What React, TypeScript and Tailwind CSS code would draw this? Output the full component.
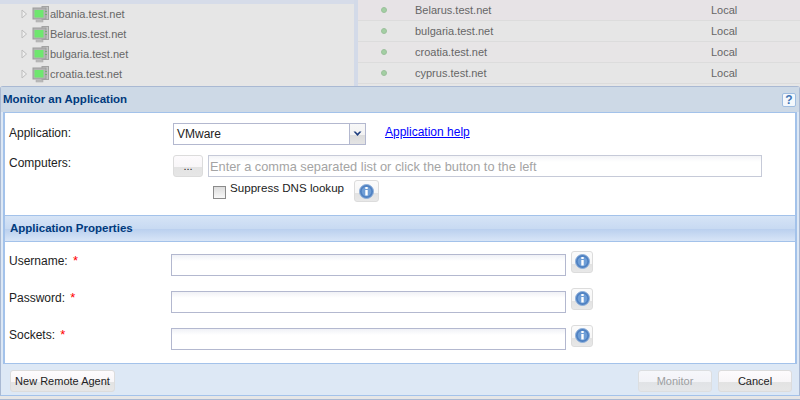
const HOSTS = ["albania.test.net", "Belarus.test.net", "bulgaria.test.net", "croatia.test.net"];
const STATUS_ROWS = ["Belarus.test.net", "bulgaria.test.net", "croatia.test.net", "cyprus.test.net"];

function ServerIcon() {
  return (
    <svg width="17" height="17" viewBox="0 0 17 17" className="shrink-0">
      <rect x="10" y="0.5" width="6.5" height="13" fill="#c4c4c4" stroke="#a2a2a2" />
      <rect x="1" y="2" width="13" height="11" fill="#b4b4b4" stroke="#9b9b9b" />
      <rect x="2.5" y="4" width="9" height="7.5" fill="#6fe66f" />
      <rect x="13" y="5" width="2" height="1" fill="#6fb56f" />
      <rect x="13" y="8" width="2" height="1" fill="#6fb56f" />
      <rect x="4" y="14" width="7" height="2" fill="#bcbcbc" stroke="#a8a8a8" strokeWidth="0.5" />
    </svg>
  );
}

function TreeArrow() {
  return (
    <svg width="7" height="10" viewBox="0 0 7 10" className="shrink-0">
      <path d="M1 1 L5.5 5 L1 9 Z" fill="#eeeeee" stroke="#bdbdbd" />
    </svg>
  );
}

function InfoGlyph() {
  return (
    <svg width="15" height="15" viewBox="0 0 15 15">
      <circle cx="7.5" cy="7.5" r="7" fill="#4f81c2" stroke="#8fb0da" />
      <circle cx="7.5" cy="7.5" r="4.8" fill="#6f9ed6" />
      <rect x="6.3" y="3" width="2.4" height="2" fill="#ffffff" />
      <rect x="6.3" y="6" width="2.4" height="5.5" fill="#ffffff" />
    </svg>
  );
}

function InfoButton() {
  return (
    <button className="flex h-[22px] w-[22px] items-center justify-center rounded-[3px] border border-[#dcdcdc] bg-[linear-gradient(#fbfbfb_0%,#f6f6f6_60%,#e2e2e2_61%,#e8e8e8_100%)]">
      <InfoGlyph />
    </button>
  );
}

function Button({ label, disabled, className }: { label: string; disabled?: boolean; className: string }) {
  return (
    <button
      className={`h-[22px] rounded-[3px] border border-[#dcdcdc] bg-[linear-gradient(#fdfbfd_0%,#f8f6f8_55%,#e3e3e3_56%,#e6e6e6_100%)] text-[11px] ${
        disabled ? "text-[#8c8c8c] opacity-80" : "text-[#222222]"
      } ${className}`}
    >
      {label}
    </button>
  );
}

function FieldRow({ label, className }: { label: string; className: string }) {
  return (
    <div className={`flex h-[25px] items-center ${className}`}>
      <div className="mb-[6px] w-[166px] shrink-0 pl-[4px] text-[#222222]">
        {label}: <span className="ml-[2px] text-[13px] text-[#ff0000]">*</span>
      </div>
      <input className="mt-[3px] h-[22px] w-[395px] border border-[#b3b8cf] bg-[linear-gradient(#f0f1f6_0%,#ffffff_30%)]" />
      <div className="mb-[4px] ml-[5px]">
        <InfoButton />
      </div>
    </div>
  );
}

export default function App() {
  return (
    <div className="flex h-[400px] w-[800px] flex-col overflow-hidden bg-[#e6e6e6] font-['Liberation_Sans',sans-serif] text-[12px]">
      <div className="flex h-[86px] shrink-0 text-[11px] text-[#666666]">
        <div className="w-[354px] shrink-0">
          <div className="h-1 bg-[#d6dce9]" />
          {HOSTS.map((host) => (
            <div key={host} className="flex h-5 items-center pl-[21px]">
              <TreeArrow />
              <div className="ml-[4px] mr-[1px]">
                <ServerIcon />
              </div>
              <span>{host}</span>
            </div>
          ))}
        </div>
        <div className="w-1 shrink-0 bg-[#d3dae8]" />
        <div className="flex-1">
          {STATUS_ROWS.map((host, i) => (
            <div
              key={host}
              className={`flex h-[21px] items-center border-b border-[#dcdcdc] ${i === 0 ? "bg-[#e7e3e6]" : i === 2 ? "bg-[#e7e5e6]" : "bg-[#e6e6e6]"}`}
            >
              <div className="ml-[23px] h-[6px] w-[6px] rounded-full border border-[#9cc09c] bg-[#a3cfa3]" />
              <span className="ml-[28px] w-[296px]">{host}</span>
              <span>Local</span>
            </div>
          ))}
        </div>
      </div>

      <div className="flex h-[310px] shrink-0 flex-col rounded-t-[3px] border border-[#a9b9d3] border-b-[#a3c2ea] bg-[#dde8f5]">
        <div className="flex h-[25px] shrink-0 items-center justify-between bg-[#cdd9e6] pl-[2px] pr-[3px]">
          <span className="text-[11.5px] font-bold text-[#003a7d]">Monitor an Application</span>
          <span className="flex h-[14px] w-[14px] items-center justify-center rounded-[2px] border border-[#9fbde0] bg-[#f4f8fc] text-[12px] font-bold leading-none text-[#3f74b5]">
            ?
          </span>
        </div>

        <div className="ml-[2px] mr-[2px] h-[252px] shrink-0 border border-l-2 border-r-2 border-[#a3c2ea] bg-white">
          <div className="flex h-[102px] flex-col text-[#222222]">
            <div className="mt-[10px] flex h-[22px] items-center">
              <div className="mb-[3px] w-[168px] shrink-0 pl-[4px]">Application:</div>
              <div className="flex h-[22px] w-[193px] shrink-0 items-center justify-between border border-[#b3b8cf]">
                <span className="pl-[3px]">VMware</span>
                <div className="flex h-full w-[16px] items-center justify-center border-l border-[#b3b8cf] bg-[linear-gradient(#f8f8f8_0%,#f2f2f2_55%,#dcdcdc_56%,#e4e4e4_100%)]">
                  <svg width="9" height="6" viewBox="0 0 9 6">
                    <path d="M0.5 0.5 L4.5 5 L8.5 0.5 L6.5 0.5 L4.5 2.5 L2.5 0.5 Z" fill="#1f3f7f" />
                  </svg>
                </div>
              </div>
              <a href="#" className="mb-[5px] ml-[19px] text-[#0000ff] underline">
                Application help
              </a>
            </div>
            <div className="mt-[10px] flex h-[22px] items-center">
              <div className="mb-[7px] w-[168px] shrink-0 pl-[4px]">Computers:</div>
              <Button label="..." className="w-[30px] shrink-0" />
              <input
                placeholder="Enter a comma separated list or click the button to the left"
                className="ml-[5px] h-[22px] w-[554px] border border-[#c6cad8] bg-[linear-gradient(#f3f4f7_0%,#ffffff_30%)] pl-[1px] text-[12.8px] placeholder:text-[#a4a4a4]"
              />
            </div>
            <div className="ml-[208px] mt-[3px] flex h-[22px] items-center">
              <div className="mt-[3px] h-[13px] w-[13px] shrink-0 border border-[#8b8b8b] bg-[linear-gradient(#dddddd,#f8f8f8)]" />
              <span className="mb-[6px] ml-[4px] w-[124px] shrink-0 text-[11.6px]">Suppress DNS lookup</span>
              <button className="flex h-[22px] w-[25px] items-center justify-center rounded-[3px] border border-[#dcdcdc] bg-[linear-gradient(#fbfbfb_0%,#f6f6f6_60%,#e2e2e2_61%,#e8e8e8_100%)]">
                <InfoGlyph />
              </button>
            </div>
          </div>

          <div className="flex h-[27px] items-center border-y border-[#a3c2ea] bg-[linear-gradient(#d6e4f6_0%,#c8daf2_50%,#b9cfee_51%,#d8e5f7_100%)] pl-[5px] text-[11.5px] font-bold text-[#003a7d]">
            Application Properties
          </div>

          <FieldRow label="Username" className="mt-[9px]" />
          <FieldRow label="Password" className="mt-[12px]" />
          <FieldRow label="Sockets" className="mt-[12px]" />
        </div>

        <div className="flex flex-1 items-start justify-between pl-[9px] pr-[7px] pt-[6px]">
          <Button label="New Remote Agent" className="w-[105px]" />
          <div className="flex gap-[6px]">
            <Button label="Monitor" disabled className="w-[74px]" />
            <Button label="Cancel" className="w-[74px]" />
          </div>
        </div>
      </div>
      <div className="flex-1 border-b border-[#a9b9d3]" />
    </div>
  );
}
